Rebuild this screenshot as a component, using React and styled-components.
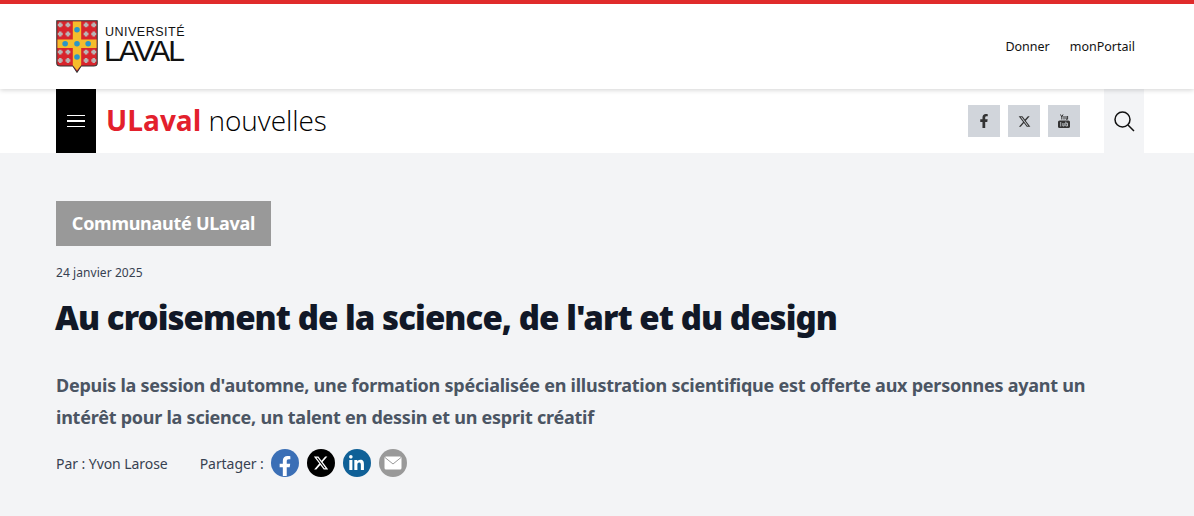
import React from 'react';
import styled, { createGlobalStyle } from 'styled-components';
import { FaFacebookF, FaLinkedinIn } from 'react-icons/fa';
import { FaXTwitter } from 'react-icons/fa6';

const GlobalStyle = createGlobalStyle`
  html, body {
    margin: 0;
    padding: 0;
    background: #f3f4f6;
    font-family: 'Noto Sans', 'Liberation Sans', sans-serif;
  }
  * { box-sizing: border-box; }
`;

const TopHeader = styled.header`
  height: 89px;
  background: #fff;
  border-top: 4px solid #e02b2b;
  padding: 0 59px 0 56px;
  display: flex;
  align-items: center;
  justify-content: space-between;
  box-shadow: 0 1px 5px rgba(0, 0, 0, 0.18);
  position: relative;
  z-index: 1;
`;

const LogoWrap = styled.a`
  display: flex;
  align-items: center;
  gap: 6px;
  color: #111;
`;

const LogoWords = styled.div`
  display: flex;
  flex-direction: column;
  margin-top: -3px;
  font-family: 'Liberation Sans', sans-serif;
`;

const LogoSmall = styled.span`
  font-size: 12.5px;
  line-height: 12px;
  letter-spacing: 0.5px;
  padding-left: 1px;
`;

const LogoBig = styled.span`
  font-size: 30px;
  line-height: 26px;
  letter-spacing: -2px;
`;

const TopLinks = styled.nav`
  display: flex;
  gap: 20px;
`;

const TopLink = styled.a`
  font-size: 12.5px;
  color: #111;
`;

const NavBar = styled.div`
  height: 64px;
  background: #fff;
  padding: 0 50px 0 56px;
  display: flex;
  align-items: center;
`;

const MenuButton = styled.button`
  width: 40px;
  height: 64px;
  background: #000;
  border: 0;
  padding: 0;
  display: flex;
  flex-direction: column;
  align-items: center;
  justify-content: center;
  gap: 4px;
`;

const MenuLine = styled.span`
  width: 18px;
  height: 1.5px;
  background: #fff;
`;

const SiteTitle = styled.div`
  margin-left: 10px;
  padding-bottom: 2px;
  font-family: 'Open Sans', sans-serif;
  font-size: 28px;
  font-weight: 300;
  letter-spacing: -0.05px;
  color: #000;
  flex: 1;
`;

const SiteRed = styled.span`
  color: #e3202c;
  font-weight: 700;
  letter-spacing: 0;
`;

const SocialRow = styled.div`
  display: flex;
  gap: 8px;
  margin-right: 24px;
`;

const SocialSquare = styled.a`
  width: 32px;
  height: 32px;
  background: #d1d5db;
  color: #333;
  display: flex;
  align-items: center;
  justify-content: center;
  font-size: ${p => p.$size || 13}px;
`;

const SearchBox = styled.div`
  width: 40px;
  height: 64px;
  background: #f3f4f6;
  display: flex;
  align-items: center;
  justify-content: center;
`;

const Main = styled.main`
  padding: 48px 56px 0;
`;

const Tag = styled.div`
  display: inline-block;
  height: 45px;
  width: 215px;
  background: #999;
  color: #fff;
  font-size: 18px;
  font-weight: 700;
  line-height: 45px;
  letter-spacing: -0.27px;
  text-align: center;
`;

const DateLine = styled.div`
  margin-top: 17px;
  font-size: 12px;
  line-height: 20px;
  letter-spacing: 0.07px;
  color: #374151;
`;

const Title = styled.h1`
  margin: 15px 0 0 -1px;
  font-size: 33px;
  line-height: 40px;
  font-weight: 900;
  letter-spacing: -0.93px;
  color: #111827;
`;

const Lead = styled.p`
  margin: 31px 0 0;
  font-size: 18px;
  line-height: 32px;
  font-weight: 700;
  letter-spacing: -0.24px;
  color: #4b5563;
`;

const MetaRow = styled.div`
  margin-top: 16px;
  display: flex;
  align-items: center;
  font-size: 14px;
  letter-spacing: -0.06px;
  color: #374151;
`;

const ShareLabel = styled.span`
  margin-left: 32px;
  margin-right: 7px;
`;

const ShareIcons = styled.div`
  display: flex;
  gap: 8px;
`;

const ShareCircle = styled.a`
  width: 28px;
  height: 28px;
  border-radius: 50%;
  background: ${p => p.$bg};
  color: #fff;
  display: flex;
  align-items: center;
  justify-content: center;
  overflow: hidden;
  font-size: ${p => p.$size || 16}px;
`;

const FacebookGlyph = styled(FaFacebookF)`
  margin-top: 6px;
`;

const fleur = [[6, 7], [17, 7], [6, 20], [17, 20], [43, 7], [54, 7], [43, 20], [54, 20], [6, 46], [17, 46], [6, 58], [17, 58], [43, 46], [54, 46], [43, 58], [54, 58]];
const dots = [[30, 14], [13, 34], [30, 34], [46, 34], [30, 53]];

function Shield() {
  return (
    <svg width="42" height="53" viewBox="0 0 60 76">
      <path d="M1 1H59V62Q59 66 54 66H36L30 75L24 66H6Q1 66 1 62Z" fill="#d8242c" stroke="#333" strokeWidth="1.5" />
      <path d="M24 2H36V28H58V40H36V65L30 72L24 65V40H2V28H24Z" fill="#f5bd2c" />
      {fleur.map(([x, y]) => (
        <path key={`${x}-${y}`} d={`M${x - 3.5} ${y}H${x + 3.5}M${x} ${y - 3.5}V${y + 3.5}`} stroke="#b9b5b5" strokeWidth="3.6" />
      ))}
      {dots.map(([x, y]) => (
        <circle key={`${x}-${y}`} cx={x} cy={y} r="4" fill="#2a96c8" />
      ))}
    </svg>
  );
}

function MailGlyph() {
  return (
    <svg width="18" height="14" viewBox="0 0 18 14" fill="none">
      <rect x="0.5" y="0.5" width="17" height="13" rx="1.5" fill="#fff" />
      <path d="M1 1.5L9 8L17 1.5" stroke="#999" strokeWidth="1" />
    </svg>
  );
}

function YoutubeStacked() {
  return (
    <svg width="12" height="14" viewBox="0 0 12 14" fill="#333">
      <path d="M2.5 0.5L3.8 3L5 0.5M3.8 3V5.5" stroke="#333" strokeWidth="1" fill="none" />
      <path d="M6 2V5.5M8 2V5.2H9.6V2" stroke="#333" strokeWidth="1" fill="none" />
      <rect x="0" y="6.5" width="12" height="7.5" rx="1.6" />
      <path d="M2.7 8V12.5M4.8 9V12H6.2V9M7.8 7.6V12H9.5V9.2H7.8" stroke="#d1d5db" strokeWidth="0.8" fill="none" />
    </svg>
  );
}

export default function App() {
  return (
    <>
      <GlobalStyle />
      <TopHeader>
        <LogoWrap>
          <Shield />
          <LogoWords>
            <LogoSmall>UNIVERSITÉ</LogoSmall>
            <LogoBig>LAVAL</LogoBig>
          </LogoWords>
        </LogoWrap>
        <TopLinks>
          <TopLink>Donner</TopLink>
          <TopLink>monPortail</TopLink>
        </TopLinks>
      </TopHeader>
      <NavBar>
        <MenuButton aria-label="Menu">
          <MenuLine />
          <MenuLine />
          <MenuLine />
        </MenuButton>
        <SiteTitle><SiteRed>ULaval</SiteRed> nouvelles</SiteTitle>
        <SocialRow>
          <SocialSquare $size={14}><FaFacebookF /></SocialSquare>
          <SocialSquare><FaXTwitter /></SocialSquare>
          <SocialSquare><YoutubeStacked /></SocialSquare>
        </SocialRow>
        <SearchBox>
          <svg width="22" height="22" viewBox="0 0 22 22" fill="none" stroke="#111" strokeWidth="1.5">
            <circle cx="9.5" cy="9.5" r="7.5" />
            <path d="M15 15L21 21" />
          </svg>
        </SearchBox>
      </NavBar>
      <Main>
        <Tag>Communauté ULaval</Tag>
        <DateLine>24 janvier 2025</DateLine>
        <Title>Au croisement de la science, de l'art et du design</Title>
        <Lead>
          Depuis la session d'automne, une formation spécialisée en illustration scientifique est offerte aux personnes ayant un
          <br />
          intérêt pour la science, un talent en dessin et un esprit créatif
        </Lead>
        <MetaRow>
          <span>Par : Yvon Larose</span>
          <ShareLabel>Partager :</ShareLabel>
          <ShareIcons>
            <ShareCircle $bg="#3b6fb6" $size={20}><FacebookGlyph /></ShareCircle>
            <ShareCircle $bg="#000"><FaXTwitter /></ShareCircle>
            <ShareCircle $bg="#0f6097" $size={17}><FaLinkedinIn /></ShareCircle>
            <ShareCircle $bg="#999"><MailGlyph /></ShareCircle>
          </ShareIcons>
        </MetaRow>
      </Main>
    </>
  );
}
